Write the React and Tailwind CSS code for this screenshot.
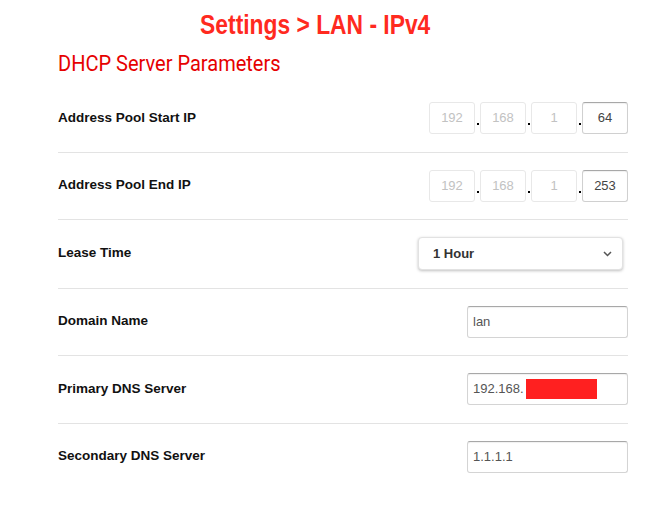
const rows = [
  { label: "Address Pool Start IP", type: "ip", value: ["192", "168", "1", "64"] },
  { label: "Address Pool End IP", type: "ip", value: ["192", "168", "1", "253"] },
  { label: "Lease Time", type: "select", value: "1 Hour" },
  { label: "Domain Name", type: "text", value: "lan" },
  { label: "Primary DNS Server", type: "redacted", value: "192.168." },
  { label: "Secondary DNS Server", type: "text", value: "1.1.1.1" },
];

function IpField({ parts }) {
  return (
    <div className="flex items-center">
      {parts.map((p, i) => {
        const last = i === parts.length - 1;
        return (
          <div key={i} className="flex items-center">
            {i > 0 && (
              <span className="w-[5px] h-[32px] flex items-end justify-center pb-[9px]">
                <span className="w-[2px] h-[2px] bg-black" />
              </span>
            )}
            <div
              className={`w-[46px] h-[32px] flex items-center justify-center rounded-[3px] border text-[13px] ${
                last
                  ? "border-[#d0d0d0] border-t-[#a8a8a8] text-[#444] shadow-[inset_0_1px_1px_rgba(0,0,0,0.06)]"
                  : "border-[#e8e8e8] text-[#c2c2c2]"
              }`}
            >
              {p}
            </div>
          </div>
        );
      })}
    </div>
  );
}

function TextField({ children }) {
  return (
    <div className="w-[161px] h-[32px] flex items-center pl-[5px] rounded-[3px] border border-[#d4d4d4] border-t-[#a8a8a8] text-[13px] text-[#555] shadow-[inset_0_1px_1px_rgba(0,0,0,0.06)]">
      {children}
    </div>
  );
}

function SelectField({ value }) {
  return (
    <div className="mr-[5px] w-[205px] h-[33px] flex items-center justify-between pl-[14px] pr-[10px] rounded-[4px] border border-[#e2e2e2] bg-white shadow-[0_1px_3px_rgba(0,0,0,0.25)] text-[13px] font-semibold text-[#333]">
      <span>{value}</span>
      <svg width="9" height="6" viewBox="0 0 9 6" fill="none">
        <path d="M1 1l3.5 3.5L8 1" stroke="#555" strokeWidth="1.5" />
      </svg>
    </div>
  );
}

export default function App() {
  return (
    <div className="w-[672px] h-[524px] bg-white overflow-hidden font-['Liberation_Sans',Arial,sans-serif]">
      <div className="w-[630px] pt-[9px] text-center">
        <h1 className="inline-block scale-x-[0.815] origin-center text-[28px] leading-[32px] font-bold text-[#ff2a1f]">
          Settings &gt; LAN - IPv4
        </h1>
      </div>
      <div className="pl-[58px] pr-[44px]">
        <h2 className="mt-[10px] inline-block scale-x-[0.91] origin-left text-[22px] leading-[26px] text-[#e60000] font-['Roboto',sans-serif]">
          DHCP Server Parameters
        </h2>
        <div className="mt-[7px] flex flex-col">
          {rows.map((r, i) => (
            <div
              key={r.label}
              className={`flex items-center justify-between pt-[17px] pb-[17.5px] ${
                i < rows.length - 1 ? "border-b border-[#e3e3e3]" : ""
              }`}
            >
              <span className="text-[13.5px] font-bold text-[#111]">{r.label}</span>
              {r.type === "ip" && <IpField parts={r.value} />}
              {r.type === "select" && <SelectField value={r.value} />}
              {r.type === "text" && <TextField>{r.value}</TextField>}
              {r.type === "redacted" && (
                <TextField>
                  <span>{r.value}</span>
                  <span className="ml-[2px] w-[71px] h-[20px] bg-[#ff2020]" />
                </TextField>
              )}
            </div>
          ))}
        </div>
      </div>
    </div>
  );
}
